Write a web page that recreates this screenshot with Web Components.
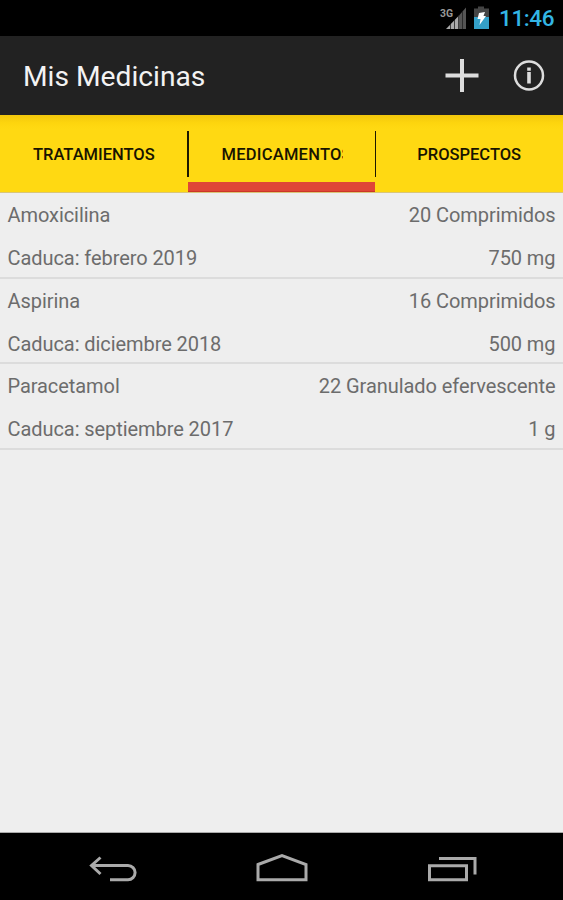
<!DOCTYPE html>
<html lang="es">
<head>
<meta charset="utf-8">
<title>Mis Medicinas</title>
<style>
body {
    margin: 0;
    background-color: #eee;
    font-family: Roboto, sans-serif;
}
</style>
</head>
<body>
<medicine-app></medicine-app>

<script>
function define(name, html, setup) {
    const template = document.createElement("template");
    template.innerHTML = html;
    customElements.define(name, class extends HTMLElement {
        constructor() {
            super();
            this.attachShadow({mode: "open"});
            this.shadowRoot.appendChild(template.content.cloneNode(true));
        }

        connectedCallback() {
            if (setup) setup(this);
        }
    });
}

define("status-bar", `
<style>
:host {
    display: flex;
    justify-content: flex-end;
    height: 36px;
    background-color: #000;
    color: #33b5e5;
    font-size: 22.500px;
    line-height: 37px;
}

svg {
    width: 60px;
    height: 36px;
}

span {
    width: 64px;
    font-weight: 500;
    letter-spacing: -.4px;
    white-space: nowrap;
}
</style>
<svg viewBox="0 0 60 36">
    <text x="1" y="17" font-size="11" font-weight="700" fill="#999" textLength="13" lengthAdjust="spacingAndGlyphs">3G</text>
    <path d="M7 29L20 15.500V29Z" fill="#aaa"/>
    <path d="M20 15.500L27 7.500V29H20Z" fill="#555"/>
    <path d="M11.500 24V29M15.500 20V29M19.500 16V29M23.500 11V29" stroke="#222" stroke-width=".8"/>
    <path d="M39 6.500H45V8.500H50V17H35V8.500H39Z" fill="#444"/>
    <path d="M35 17H50V29H35Z" fill="#34a0c8"/>
    <path d="M40 13L46 12L44.500 16H47L40.500 25L41.500 19H38.500Z" fill="#fff"/>
</svg>
<span><slot></slot></span>`);

define("action-bar", `
<style>
:host {
    display: flex;
    align-items: center;
    height: 79px;
    background-color: #222;
    color: #f3f3f3;
}

h1 {
    flex: 1;
    margin: 2px 0 0 23px;
    font-size: 28.200px;
    font-weight: 400;
    line-height: 36px;
    white-space: nowrap;
}

svg {
    width: 34px;
    height: 34px;
}

.add {
    margin-right: 33px;
}

.info {
    margin-right: 17px;
}
</style>
<h1><slot></slot></h1>
<svg class="add" viewBox="0 0 34 34" fill="none" stroke="#ddd" stroke-width="4">
    <path d="M17 0V33M.5 16.500H33.500"/>
</svg>
<svg class="info" viewBox="0 0 34 34" fill="none" stroke="#ddd">
    <circle cx="17" cy="16.500" r="14" stroke-width="2.500"/>
    <path d="M17 8.500V11.700M17 13V24.500" stroke-width="3.600"/>
</svg>`);

define("tab-bar", `
<style>
:host {
    display: flex;
    height: 77px;
    background: linear-gradient(#f1c70c, #fdd50e 8px, #ffd912 14px);
    box-shadow: 0 1px #d9c678;
}
</style>
<slot></slot>`);

define("tab-item", `
<style>
:host {
    flex: 1;
    display: flex;
    flex-direction: column;
    color: #181400;
}

div {
    flex: 1;
    display: flex;
    justify-content: center;
    align-items: center;
    padding-top: 13px;
}

span {
    font-size: 16.500px;
    font-weight: 500;
    line-height: 20px;
    white-space: nowrap;
}

i {
    height: 10px;
}

:host([selected]) i {
    background-color: #df4637;
    border-bottom: 1px solid #cb3527;
    box-sizing: border-box;
}

:host([selected]) div {
    margin: 16px -1px 5px;
    padding: 2px 0 0;
    border: solid #1c1800;
    border-width: 0 1px 0 2px;
}

/* long titles are cut off, with no ellipsis */
:host([selected]) span {
    width: 121px;
    overflow: hidden;
    letter-spacing: .25px;
}
</style>
<div><span><slot></slot></span></div>
<i></i>`);

define("medicine-row", `
<style>
:host {
    display: grid;
    grid-template-columns: auto auto;
    grid-template-rows: 43px 42.750px;
    justify-content: space-between;
    box-sizing: border-box;
    height: 85.750px;
    padding: 0 7.500px;
    border-bottom: 2px solid #dcdcdc;
    color: #6c6c6c;
    font-size: 20px;
    line-height: 45px;
    letter-spacing: -.07px;
    white-space: nowrap;
}

span:nth-of-type(even) {
    text-align: right;
}
</style>
<span><slot></slot></span>
<span id="amount"></span>
<span id="expiry"></span>
<span id="dose"></span>`, row => {
    for (const key of ["amount", "dose"]) {
        row.shadowRoot.getElementById(key).textContent = row.getAttribute(key);
    }
    row.shadowRoot.getElementById("expiry").textContent = "Caduca: " + row.getAttribute("expiry");
});

define("nav-bar", `
<style>
:host {
    display: grid;
    grid-template-columns: repeat(3, 169.500px);
    justify-content: center;
    justify-items: center;
    align-items: center;
    height: 67px;
    background-color: #000;
    box-shadow: 0 -1px #aaa;
}

svg {
    width: 56px;
    height: 36px;
    fill: none;
    stroke: #aaa;
    stroke-width: 3;
}
</style>
<svg viewBox="0 0 56 36"><path d="M16.500 8.500L7.500 16.500L16.500 25M7.500 16.500H44A7.100 7.100 0 0 1 44 30.700H26"/></svg>
<svg viewBox="0 0 56 36"><path d="M4 15.500L28 6.500L52 15.500V30.700H4Z"/></svg>
<svg viewBox="0 0 56 36"><path d="M6.500 16.700H43.500V30.700H6.500ZM16 9.500H52V25.500"/></svg>`);

define("medicine-app", `
<style>
:host {
    display: flex;
    flex-direction: column;
    height: 900px;
}

main {
    flex: 1;
    padding-top: .75px;
}
</style>
<status-bar>11:46</status-bar>
<action-bar>Mis Medicinas</action-bar>
<tab-bar>
    <tab-item>TRATAMIENTOS</tab-item>
    <tab-item selected>MEDICAMENTOS</tab-item>
    <tab-item>PROSPECTOS</tab-item>
</tab-bar>
<main>
    <medicine-row amount="20 Comprimidos" expiry="febrero 2019" dose="750 mg">Amoxicilina</medicine-row>
    <medicine-row amount="16 Comprimidos" expiry="diciembre 2018" dose="500 mg">Aspirina</medicine-row>
    <medicine-row amount="22 Granulado efervescente" expiry="septiembre 2017" dose="1 g">Paracetamol</medicine-row>
</main>
<nav-bar></nav-bar>`);
</script>
</body>
</html>
